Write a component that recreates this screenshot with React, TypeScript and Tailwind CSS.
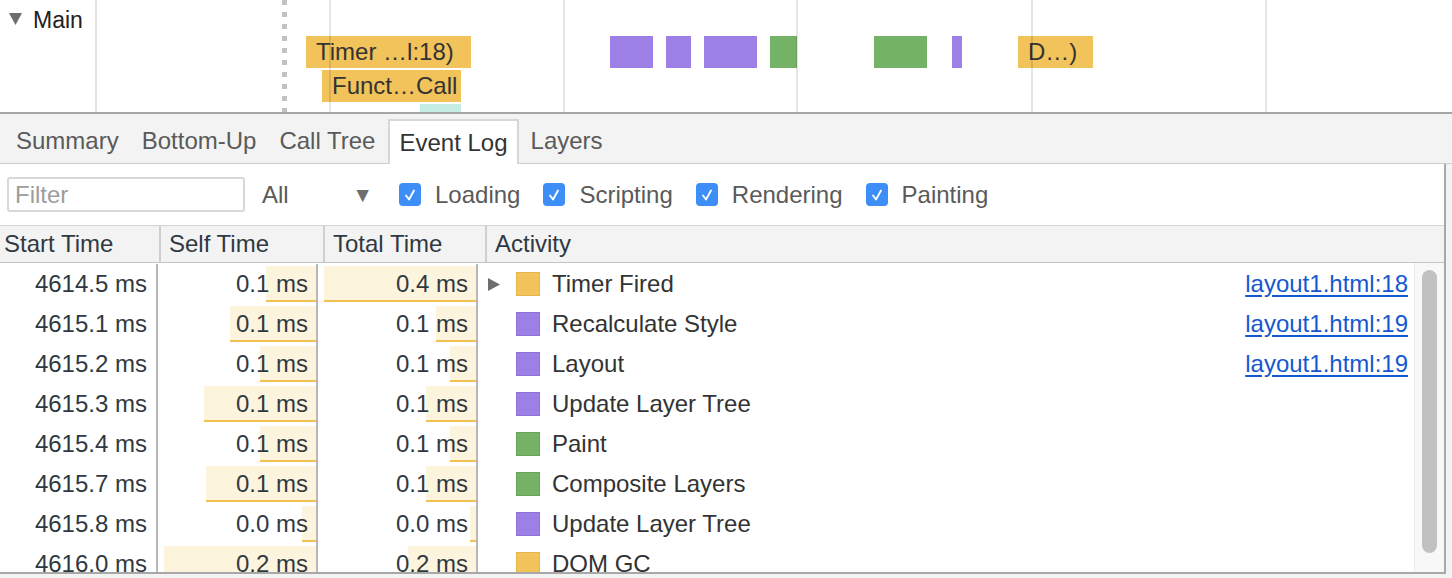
import React from 'react';

// --- Data ---
type Kind = 'script' | 'render' | 'paint';

const kindColor: Record<Kind, string> = {
  script: 'bg-[#f1c35a] border-[#e5b64c]',
  render: 'bg-[#9d80e6] border-[#8f72d8]',
  paint: 'bg-[#74b266] border-[#67a559]',
};

interface Row {
  start: string;
  self: string;
  total: string;
  selfBar: number;
  totalBar: number;
  name: string;
  kind: Kind;
  link?: string;
  expandable?: boolean;
}

const rows: Row[] = [
  { start: '4614.5 ms', self: '0.1 ms', total: '0.4 ms', selfBar: 50, totalBar: 152, name: 'Timer Fired', kind: 'script', link: 'layout1.html:18', expandable: true },
  { start: '4615.1 ms', self: '0.1 ms', total: '0.1 ms', selfBar: 86, totalBar: 40, name: 'Recalculate Style', kind: 'render', link: 'layout1.html:19' },
  { start: '4615.2 ms', self: '0.1 ms', total: '0.1 ms', selfBar: 56, totalBar: 26, name: 'Layout', kind: 'render', link: 'layout1.html:19' },
  { start: '4615.3 ms', self: '0.1 ms', total: '0.1 ms', selfBar: 112, totalBar: 50, name: 'Update Layer Tree', kind: 'render' },
  { start: '4615.4 ms', self: '0.1 ms', total: '0.1 ms', selfBar: 56, totalBar: 26, name: 'Paint', kind: 'paint' },
  { start: '4615.7 ms', self: '0.1 ms', total: '0.1 ms', selfBar: 110, totalBar: 50, name: 'Composite Layers', kind: 'paint' },
  { start: '4615.8 ms', self: '0.0 ms', total: '0.0 ms', selfBar: 14, totalBar: 6, name: 'Update Layer Tree', kind: 'render' },
  { start: '4616.0 ms', self: '0.2 ms', total: '0.2 ms', selfBar: 152, totalBar: 68, name: 'DOM GC', kind: 'script' },
];

const tabs = ['Summary', 'Bottom-Up', 'Call Tree', 'Event Log', 'Layers'];
const categories = ['Loading', 'Scripting', 'Rendering', 'Painting'];
const gridLines = [329, 563, 796, 1031, 1265];

// flame chart blocks (left/top relative to the page)
const flame = [
  { x: 306, y: 36, w: 165, h: 32, c: 'bg-[#f1c35a]', label: 'Timer …l:18)' },
  { x: 322, y: 70, w: 139, h: 32, c: 'bg-[#f1c35a]', label: 'Funct…Call' },
  { x: 420, y: 104, w: 41, h: 8, c: 'bg-[#c6ede1]' },
  { x: 610, y: 36, w: 43, h: 32, c: 'bg-[#9d80e6]' },
  { x: 666, y: 36, w: 25, h: 32, c: 'bg-[#9d80e6]' },
  { x: 704, y: 36, w: 53, h: 32, c: 'bg-[#9d80e6]' },
  { x: 770, y: 36, w: 27, h: 32, c: 'bg-[#74b266]' },
  { x: 874, y: 36, w: 53, h: 32, c: 'bg-[#74b266]' },
  { x: 952, y: 36, w: 8, h: 32, c: 'bg-[#9d80e6]' },
  { x: 1018, y: 36, w: 75, h: 32, c: 'bg-[#f1c35a]', label: 'D…)' },
];

// --- Pieces ---
const Checkbox = () => (
  <span className="w-[22px] h-[23px] rounded-[4px] bg-[#3d8ef6] flex items-center justify-center">
    <svg width="12" height="14" viewBox="0 0 12 14" fill="none">
      <path d="M2 7.5 L5 11.5 L10 2.5" stroke="white" strokeWidth="1.8" strokeLinecap="round" strokeLinejoin="round" />
    </svg>
  </span>
);

const BarCell: React.FC<{ width: number; value: string; className: string }> = ({ width, value, className }) => (
  <div className={`relative h-full flex items-center justify-end pr-[8px] ${className}`}>
    <div
      className="absolute right-0 top-[2px] bottom-[2px] bg-[#fdf4dd] border-b-2 border-[#f2c04f]"
      style={{ width }}
    />
    <span className="relative">{value}</span>
  </div>
);

export default function App() {
  return (
    <div className="w-[1452px] h-[578px] overflow-hidden bg-white font-['Liberation_Sans',Arial,sans-serif] text-[24px] text-[#303942]">
      {/* Flame chart */}
      <div className="relative h-[112px] flex">
        <div className="w-[97px] border-r-2 border-[#e3e3e3] flex items-start pt-[3px] pl-[9px] text-[23px] text-[#222]">
          <svg width="13" height="12" viewBox="0 0 13 12" className="mt-[10px]">
            <path d="M0 0 H13 L6.5 12 Z" fill="#6d6d6d" />
          </svg>
          <span className="ml-[11px]">Main</span>
        </div>
        <div className="absolute left-[282px] top-0 w-[5px] h-[112px] bg-[repeating-linear-gradient(to_bottom,#c2c2c2_0px,#c2c2c2_5px,transparent_5px,transparent_12px)]" />
        {flame.map((b, i) => (
          <div
            key={i}
            className={`absolute flex items-center pl-[10px] text-[24px] text-[#333] whitespace-nowrap overflow-hidden ${b.c}`}
            style={{ left: b.x, top: b.y, width: b.w, height: b.h }}
          >
            {b.label}
          </div>
        ))}
        {gridLines.map((x) => (
          <div key={x} className="absolute top-0 h-[112px] w-[2px] bg-black/10" style={{ left: x }} />
        ))}
      </div>
      <div className="h-[2px] bg-[#a5a5a5]" />

      {/* Tabs */}
      <div className="h-[50px] bg-[#f3f3f3] border-b border-[#cdcdcd] flex items-end pl-[6px]">
        {tabs.map((t) => (
          <div
            key={t}
            className={
              t === 'Event Log'
                ? 'h-[45px] -mb-px mr-[2px] px-[9px] flex items-center bg-white border-x-2 border-t-2 border-[#d6d6d6] text-[#333]'
                : 'h-[44px] mr-[3px] px-[10px] flex items-center text-[#5a5a5a]'
            }
          >
            {t}
          </div>
        ))}
      </div>

      {/* Body */}
      <div className="flex h-[410px]">
        <div className="w-[1446px] border-r-2 border-b-2 border-[#a8a8a8] flex flex-col">
          {/* Toolbar */}
          <div className="h-[62px] shrink-0 border-b border-[#d4d4d4] flex items-center text-[#5a5a5a]">
            <div className="ml-[7px] w-[238px] h-[35px] border-2 border-[#d8d8d8] rounded-[3px] pl-[6px] flex items-center text-[#9d9d9d]">
              Filter
            </div>
            <div className="ml-[17px] w-[111px] flex items-center justify-between">
              <span>All</span>
              <span className="text-[21px] text-[#6e6e6e]">▼</span>
            </div>
            <div className="ml-[26px] flex items-center">
              {categories.map((c) => (
                <div key={c} className="flex items-center mr-[23px]">
                  <Checkbox />
                  <span className="ml-[14px]">{c}</span>
                </div>
              ))}
            </div>
          </div>

          {/* Header */}
          <div className="h-[37px] shrink-0 bg-[#f3f3f3] border-b border-[#c4c4c4] flex">
            <div className="w-[161px] pl-[4px] border-r-2 border-[#cfcfcf] flex items-center">Start Time</div>
            <div className="w-[164px] pl-[8px] border-r-2 border-[#cfcfcf] flex items-center">Self Time</div>
            <div className="w-[162px] pl-[8px] border-r-2 border-[#cfcfcf] flex items-center">Total Time</div>
            <div className="flex-1 pl-[8px] flex items-center">Activity</div>
          </div>

          {/* Rows */}
          <div className="flex-1 flex overflow-hidden">
            <div className="flex-1 overflow-hidden pt-[1px]">
              {rows.map((r, i) => (
                <div key={i} className="h-[40px] flex">
                  <div className="w-[158px] shrink-0 border-r-2 border-[#b8b8b8] flex items-center justify-end pr-[9px]">
                    {r.start}
                  </div>
                  <BarCell width={r.selfBar} value={r.self} className="w-[160px] shrink-0 border-r-2 border-[#b8b8b8]" />
                  <BarCell width={r.totalBar} value={r.total} className="w-[160px] shrink-0 border-r-2 border-[#b8b8b8]" />
                  <div className="flex-1 flex items-center pl-[10px] pr-[6px]">
                    <span className="w-[12px] h-[13px] flex">
                      {r.expandable && (
                        <svg width="12" height="13" viewBox="0 0 12 13">
                          <path d="M0 0 L12 6.5 L0 13 Z" fill="#6e6e6e" />
                        </svg>
                      )}
                    </span>
                    <span className={`ml-[16px] w-[24px] h-[24px] border ${kindColor[r.kind]}`} />
                    <span className="ml-[12px] text-[#333]">{r.name}</span>
                    {r.link && (
                      <span className="ml-auto text-[#1558d0] underline underline-offset-[3px]">{r.link}</span>
                    )}
                  </div>
                </div>
              ))}
            </div>
            {/* Scrollbar */}
            <div className="w-[30px] shrink-0 bg-[#f8f8f8] border-l border-[#ececec] pt-[7px] pl-[7px]">
              <div className="w-[15px] h-[283px] rounded-full bg-[#c1c1c1]" />
            </div>
          </div>
        </div>
        <div className="flex-1 bg-[#f3f3f3]" />
      </div>
      <div className="h-[4px] bg-[#f3f3f3]" />
    </div>
  );
}
